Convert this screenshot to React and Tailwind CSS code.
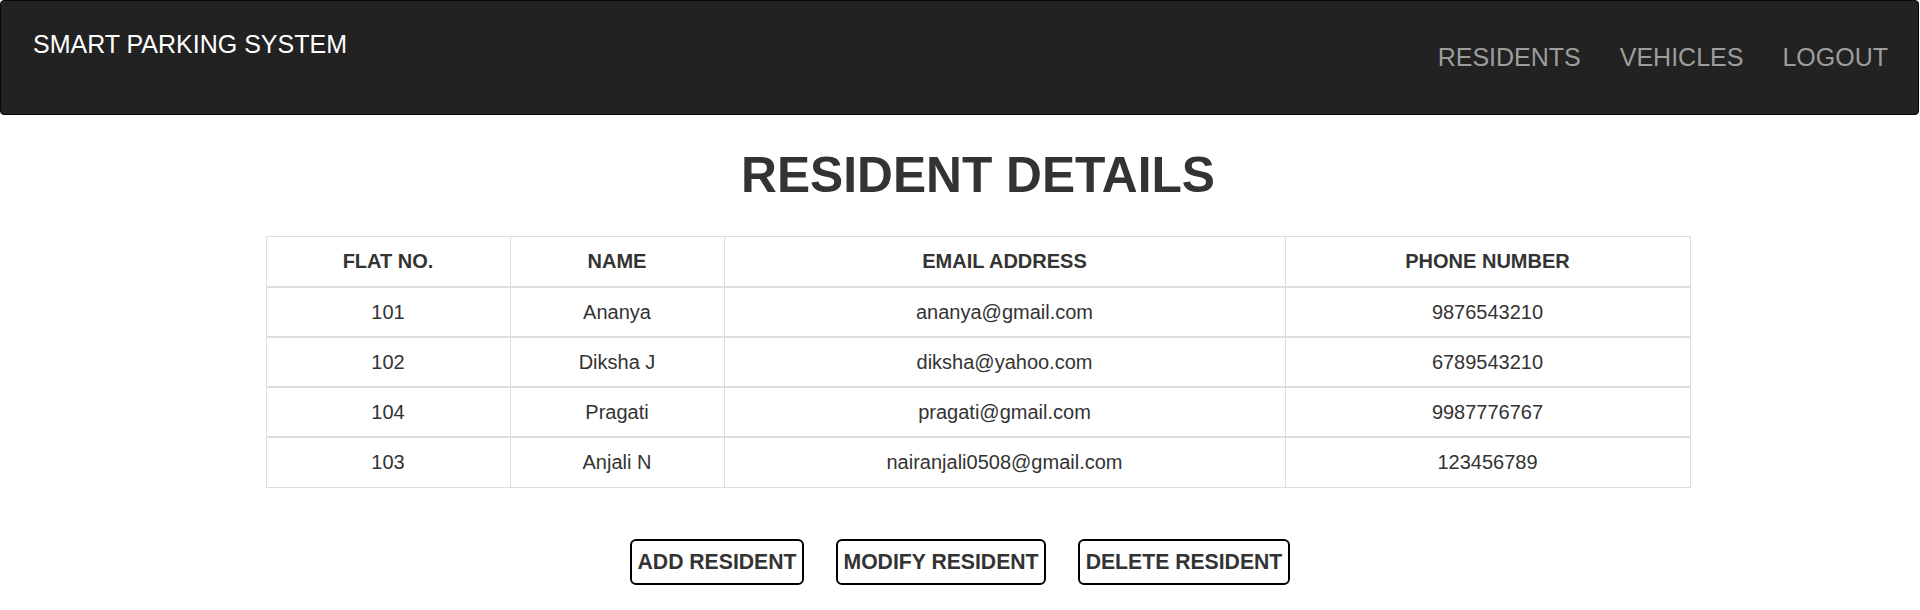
import React from "react";

const residents = [
  { flat: "101", name: "Ananya", email: "ananya@gmail.com", phone: "9876543210" },
  { flat: "102", name: "Diksha J", email: "diksha@yahoo.com", phone: "6789543210" },
  { flat: "104", name: "Pragati", email: "pragati@gmail.com", phone: "9987776767" },
  { flat: "103", name: "Anjali N", email: "nairanjali0508@gmail.com", phone: "123456789" },
];

export default function App() {
  return (
    <div className="min-h-[610px] bg-white text-[#333] font-['Liberation_Sans',Arial,sans-serif]">
      <nav className="w-[1919px] h-[115px] bg-[#222] border border-[#080808] rounded-[4px] flex justify-between items-start">
        <div className="pl-[32px] pt-[31px] text-[25px] leading-none text-white">SMART PARKING SYSTEM</div>
        <ul className="flex gap-[39px] pr-[30px] pt-[44px] text-[25px] leading-none text-[#9d9d9d]">
          <li>RESIDENTS</li>
          <li>VEHICLES</li>
          <li>LOGOUT</li>
        </ul>
      </nav>

      <div className="pl-[36px]">
        <h1 className="mt-[36px] text-center text-[49.7px] leading-none font-bold">RESIDENT DETAILS</h1>
        <table className="mt-[35px] mx-auto w-[1424px] table-fixed border-collapse text-[20px] text-center">
          <thead>
            <tr className="border-t border-[#ddd] border-b-2">
              <th className="w-[244px] h-[51px] border-x border-[#ddd] font-bold">FLAT NO.</th>
              <th className="w-[214px] border-x border-[#ddd] font-bold">NAME</th>
              <th className="w-[561px] border-x border-[#ddd] font-bold">EMAIL ADDRESS</th>
              <th className="w-[405px] border-x border-[#ddd] font-bold">PHONE NUMBER</th>
            </tr>
          </thead>
          <tbody>
            {residents.map((r, i) => (
              <tr
                key={r.flat}
                className={i === residents.length - 1 ? "border-b border-[#ddd]" : "border-b-2 border-[#ddd]"}
              >
                <td className="h-[50px] border-x border-[#ddd]">{r.flat}</td>
                <td className="border-x border-[#ddd]">{r.name}</td>
                <td className="border-x border-[#ddd]">{r.email}</td>
                <td className="border-x border-[#ddd]">{r.phone}</td>
              </tr>
            ))}
          </tbody>
        </table>
      </div>

      <div className="mt-[51px] flex justify-center gap-[32px]">
        <button className="w-[174px] h-[46px] border-2 border-black rounded-[6px] bg-white text-[21.2px] leading-none font-bold text-[#333] flex items-center justify-center">
          ADD RESIDENT
        </button>
        <button className="w-[210px] h-[46px] border-2 border-black rounded-[6px] bg-white text-[21.2px] leading-none font-bold text-[#333] flex items-center justify-center">
          MODIFY RESIDENT
        </button>
        <button className="w-[212px] h-[46px] border-2 border-black rounded-[6px] bg-white text-[21.2px] leading-none font-bold text-[#333] flex items-center justify-center">
          DELETE RESIDENT
        </button>
      </div>
    </div>
  );
}
